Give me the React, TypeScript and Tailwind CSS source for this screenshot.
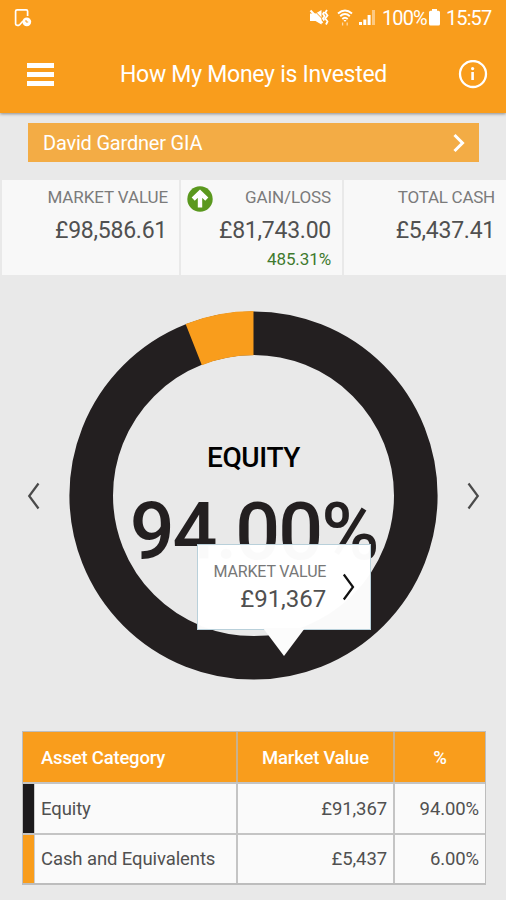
import React from 'react';

const assets = [
  { name: 'Equity', value: '£91,367', percent: '94.00%', swatch: 'bg-[#1c1a1c]' },
  { name: 'Cash and Equivalents', value: '£5,437', percent: '6.00%', swatch: 'bg-[#f99d1c]' },
];

const StatusBar: React.FC = () => (
  <div className="flex h-9 items-center pl-[14px] pr-[13px] text-white">
    <svg className="h-[20px] w-[20px]" viewBox="0 0 20 20" fill="none">
      <path d="M5 17.3H3.2Q1.6 17.3 1.6 16V3.2Q1.6 1.8 3.2 1.8H12.2Q13.6 1.8 13.6 3.2V8" stroke="currentColor" strokeWidth="1.7" />
      <path d="M5 17.5L9 13" stroke="currentColor" strokeWidth="1.6" />
      <circle cx="12.8" cy="13.8" r="4.4" fill="currentColor" />
      <path d="M12 12V14H14.2" stroke="#f99d1c" strokeWidth="1" />
    </svg>

    <div className="ml-auto flex items-center">
      {/* Muted / vibrate */}
      <svg className="h-[20px] w-[22px]" viewBox="0 0 22 20" fill="none">
        <path d="M1 5.5H6.5L12.5 2V16.5L6.5 13H1Z" fill="currentColor" />
        <path d="M4.2 1.5L14.5 12" stroke="#f99d1c" strokeWidth="1" />
        <path d="M1.5 2.5L13.5 15" stroke="currentColor" strokeWidth="2" />
        <path d="M15.2 4L14 6L15.5 8L14 10.5L15.2 12.5M18 2L16.3 4.5L18.5 7.5L16.3 10.5L18.5 13.5L17 16.5" stroke="currentColor" strokeWidth="1.8" />
      </svg>
      <svg className="ml-[6px] h-[20px] w-[16px]" viewBox="0 0 16 20" fill="none">
        <path d="M1 5.5Q8 -.5 15 5.5M3.2 8.2Q8 4 12.8 8.2M5.3 11Q8 8.5 10.7 11" stroke="currentColor" strokeWidth="1.9" />
        <path d="M6.5 12L8 14L9.5 12Z" fill="currentColor" />
        <path d="M5.6 14.5V17.5M10.2 17.5V14.5" stroke="currentColor" strokeWidth="1.3" opacity=".6" />
      </svg>
      <svg className="ml-[6px] h-[20px] w-[17px]" viewBox="0 0 17 20" fill="currentColor">
        <path d="M0 14H3V17H0ZM4.3 11.5H7.3V17H4.3ZM8.6 7H11.6V17H8.6Z" />
        <path d="M13 2H16V17H13Z" opacity=".45" />
      </svg>
      <span className="ml-[6px] w-[47px] text-[20px] leading-5 tracking-[-0.9px]">100%</span>
      <svg className="h-[20px] w-[11px]" viewBox="0 0 11 20" fill="currentColor">
        <path d="M3 1H8V2.8H9.5Q11 2.8 11 4.3V16Q11 17.5 9.5 17.5H1.5Q0 17.5 0 16V4.3Q0 2.8 1.5 2.8H3Z" />
      </svg>
      <span className="ml-[6px] w-[47px] text-[20px] leading-5 tracking-[-0.9px]">15:57</span>
    </div>
  </div>
);

const Header: React.FC = () => (
  <header className="h-[113px] bg-[#f99d1c] text-white shadow-[0_1px_3px_rgba(0,0,0,0.4)]">
    <StatusBar />
    <div className="flex h-[77px] items-center justify-between pl-[27px] pr-[18px]">
      <button className="flex w-[27px] flex-col gap-[4px] pb-px">
        <span className="h-[5px] w-full bg-white" />
        <span className="h-[5px] w-full bg-white" />
        <span className="h-[5px] w-full bg-white" />
      </button>
      <h1 className="-ml-[5px] text-[23px] leading-7 tracking-[-0.27px] whitespace-nowrap">How My Money is Invested</h1>
      <svg className="h-[30px] w-[30px]" viewBox="0 0 30 30" fill="none">
        <circle cx="15" cy="14" r="13" stroke="currentColor" strokeWidth="2.3" />
        <path d="M14.6 12V20" stroke="currentColor" strokeWidth="2.6" />
        <circle cx="14.6" cy="8.6" r="1.6" fill="currentColor" />
      </svg>
    </div>
  </header>
);

const Summary: React.FC = () => (
  <div className="mt-[18px] flex h-[95px] gap-[2px] pl-[2px] text-right text-[#505050]">
    <div className="w-[177px] bg-[#f8f8f8] pr-[11px] pt-[5px]">
      <p className="text-[17px] leading-6 tracking-[-0.1px] text-[#7b7b7b]">MARKET VALUE</p>
      <p className="mt-[8px] pr-px text-[23px] leading-7 tracking-[-0.25px]">£98,586.61</p>
    </div>
    <div className="flex w-[161px] justify-between bg-[#f8f8f8] pl-[6px] pr-[11px] pt-[5px]">
      <svg className="mt-px h-[26px] w-[26px]" viewBox="0 0 26 26">
        <circle cx="13" cy="13" r="12.7" fill="#5a981e" />
        <path d="M13 21.5V7M6.2 13.2L13 6.6L19.8 13.2" fill="none" stroke="#fff" strokeWidth="4.4" />
      </svg>
      <div className="-ml-8">
        <p className="text-[17px] leading-6 tracking-[-0.1px] text-[#7b7b7b]">GAIN/LOSS</p>
        <p className="mt-[8px] text-[23px] leading-7 tracking-[-0.25px]">£81,743.00</p>
        <p className="mt-[4px] text-[17px] leading-5 tracking-[-0.1px] text-[#3f7a2e]">485.31%</p>
      </div>
    </div>
    <div className="flex-1 bg-[#f8f8f8] pr-[11px] pt-[5px]">
      <p className="text-[17px] leading-6 tracking-[-0.25px] text-[#7b7b7b]">TOTAL CASH</p>
      <p className="mt-[8px] text-[23px] leading-7 tracking-[-0.25px]">£5,437.41</p>
    </div>
  </div>
);

const AllocationChart: React.FC = () => (
  <div className="mt-[36px] flex h-[370px] items-center justify-between pl-[27px] pr-[26px]">
    <svg className="h-[28px] w-[14px] shrink-0" viewBox="0 0 14 28" fill="none">
      <path d="M11.5 1.5L2.2 14L11.5 26.5" stroke="#4a4a4a" strokeWidth="2.2" />
    </svg>

    <div className="relative h-[370px] w-[370px] shrink-0">
      <svg className="h-full w-full" viewBox="0 0 370 370" fill="none">
        <circle cx="184.5" cy="184.5" r="162.3" stroke="#231f20" strokeWidth="43.6" />
        <path d="M124.75 33.6A162.3 162.3 0 0 1 184.5 22.2" stroke="#f99d1c" strokeWidth="44.2" />
      </svg>
      <div className="absolute inset-x-0 top-[131px] text-center whitespace-nowrap">
        <p className="text-[28px] leading-8 font-medium tracking-[-0.4px] text-black">EQUITY</p>
        <p className="mt-[13px] text-[79px] leading-[90px] font-medium tracking-[-2px] text-[#231f20]">94.00%</p>
      </div>

      {/* Value callout */}
      <div className="absolute left-[128px] top-[233px] flex h-[86px] w-[174px] items-center justify-between border border-[#b9d0da] bg-white/98 pl-[16px] pr-[15px]">
        <div className="text-right whitespace-nowrap">
          <p className="text-[16px] leading-5 tracking-[-0.15px] text-[#777]">MARKET VALUE</p>
          <p className="mt-[3px] text-[24px] leading-7 text-[#505050]">£91,367</p>
        </div>
        <svg className="h-[28px] w-[13px]" viewBox="0 0 13 28" fill="none">
          <path d="M1.8 1.5L11 14L1.8 26.5" stroke="#111" strokeWidth="2.2" />
        </svg>
        <svg className="absolute left-[65px] top-[83px] h-[29px] w-[42px]" viewBox="0 0 42 29">
          <path d="M0 0H42L21 28Z" fill="#fcfcfc" />
        </svg>
      </div>
    </div>

    <svg className="h-[28px] w-[14px] shrink-0" viewBox="0 0 14 28" fill="none">
      <path d="M2.5 1.5L11.8 14L2.5 26.5" stroke="#4a4a4a" strokeWidth="2.2" />
    </svg>
  </div>
);

const AssetTable: React.FC = () => (
  <div className="mt-[50px] ml-[22px] w-[464px] border border-b-2 border-[#bdbdbd] text-[18.5px] tracking-[-0.1px] text-[#505050]">
    <div className="flex h-[50px] bg-[#f99d1c] text-center leading-[52px] font-medium tracking-[-0.2px] text-white">
      <div className="w-[213px] pl-[18px] text-left">Asset Category</div>
      <div className="w-[157px] border-l-2 border-[#c9b18e]">Market Value</div>
      <div className="flex-1 border-l-2 border-[#c9b18e]">%</div>
    </div>
    {assets.map((asset, index) => (
      <div
        key={asset.name}
        className={`flex border-t-2 border-[#c4c4c4] bg-[#fafafa] ${index === 0 ? 'h-[51px] leading-[50px]' : 'h-[50px] leading-[49px]'}`}
      >
        <div className={`w-[11px] ${asset.swatch}`} />
        <div className="w-[202px] border-l border-[#ccc] pl-[6px]">{asset.name}</div>
        <div className="w-[157px] border-l-2 border-[#c4c4c4] pr-[6px] text-right">{asset.value}</div>
        <div className="flex-1 border-l-2 border-[#c4c4c4] pr-[6px] text-right">{asset.percent}</div>
      </div>
    ))}
  </div>
);

export default function App() {
  return (
    <div className="h-[900px] w-[506px] overflow-hidden bg-[#e9e9e9] font-[Roboto,sans-serif]">
      <Header />
      <button className="mt-[10px] ml-[28px] flex h-[39px] w-[451px] items-center justify-between bg-[#f3ac45] pl-[15px] pr-[13px] pt-px text-[20px] tracking-[-0.2px] text-white">
        <span>David Gardner GIA</span>
        <svg className="mb-px h-[20px] w-[14px]" viewBox="0 0 14 20" fill="none">
          <path d="M2.5 2L10.5 10L2.5 18" stroke="currentColor" strokeWidth="3" />
        </svg>
      </button>
      <Summary />
      <AllocationChart />
      <AssetTable />
    </div>
  );
}
